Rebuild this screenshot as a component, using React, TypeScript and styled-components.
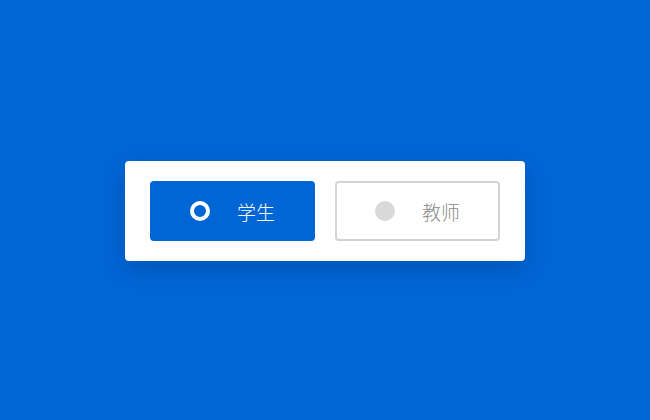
import * as React from 'react';
import styled, { createGlobalStyle } from 'styled-components';

const GlobalStyle = createGlobalStyle`
  html, body {
    margin: 0;
    padding: 0;
    height: 100%;
    background: #0066d6;
  }
  #root {
    height: 100%;
  }
`;

const Page = styled.div`
  height: 100vh;
  box-sizing: border-box;
  padding-top: 2px;
  display: flex;
  align-items: center;
  justify-content: center;
  font-family: 'Noto Sans CJK SC', 'Noto Sans', sans-serif;
`;

const Card = styled.div`
  width: 400px;
  box-sizing: border-box;
  padding: 20px 25px;
  background: #fff;
  border-radius: 4px;
  box-shadow: 0 8px 24px rgba(0, 30, 80, 0.25);
  display: flex;
  gap: 20px;
`;

const Option = styled.button<{ $active: boolean }>`
  flex: 1;
  height: 60px;
  box-sizing: border-box;
  display: flex;
  align-items: center;
  justify-content: center;
  gap: 27px;
  border-radius: 4px;
  border: 2px solid ${({ $active }) => ($active ? '#0066d6' : '#d4d4d4')};
  background: ${({ $active }) => ($active ? '#0066d6' : '#fff')};
  color: ${({ $active }) => ($active ? '#fff' : '#888')};
  font-family: inherit;
  font-size: 19px;
  font-weight: 300;
  line-height: 1;
  padding: 0;
  cursor: pointer;
`;

const Dot = styled.span<{ $active: boolean }>`
  width: 20px;
  height: 20px;
  box-sizing: border-box;
  border-radius: 50%;
  border: ${({ $active }) => ($active ? '4px solid #fff' : 'none')};
  background: ${({ $active }) => ($active ? 'transparent' : '#d9d9d9')};
`;

const Label = styled.span`
  display: inline-block;
`;

const roles = ['学生', '教师'];

export default function App() {
  const [selected, setSelected] = React.useState(0);
  return (
    <>
      <GlobalStyle />
      <Page>
        <Card>
          {roles.map((role, i) => (
            <Option key={role} $active={selected === i} onClick={() => setSelected(i)}>
              <Dot $active={selected === i} />
              <Label>{role}</Label>
            </Option>
          ))}
        </Card>
      </Page>
    </>
  );
}
